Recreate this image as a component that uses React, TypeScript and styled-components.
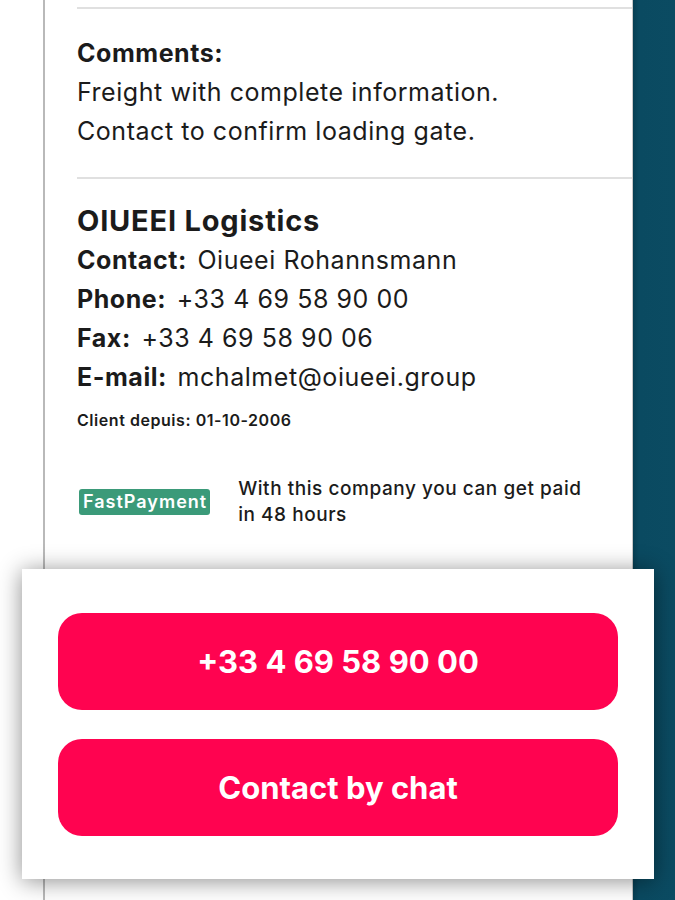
import styled, { createGlobalStyle } from 'styled-components';

const GlobalStyle = createGlobalStyle`
  html, body {
    margin: 0;
    padding: 0;
    height: 900px;
    overflow: hidden;
    background: #ffffff;
  }
  * {
    box-sizing: border-box;
  }
`;

const PHONE = '+33 4 69 58 90 00';

export default function App() {
  return (
    <Page>
      <GlobalStyle />
      <Gutter />
      <Panel>
        <Section>
          <Heading>Comments:</Heading>
          <Line>Freight with complete information.</Line>
          <Line>Contact to confirm loading gate.</Line>
        </Section>
        <Section>
          <Company>OIUEEI Logistics</Company>
          <Line>
            <Label>Contact:</Label> Oiueei Rohannsmann
          </Line>
          <Line>
            <Label>Phone:</Label> {PHONE}
          </Line>
          <Line>
            <Label>Fax:</Label> +33 4 69 58 90 06
          </Line>
          <Line>
            <Label>E-mail:</Label> mchalmet@oiueei.group
          </Line>
          <Since>Client depuis: 01-10-2006</Since>
          <PaymentRow>
            <Badge>FastPayment</Badge>
            <PaymentText>
              With this company you can get paid
              <br />
              in 48 hours
            </PaymentText>
          </PaymentRow>
        </Section>
      </Panel>
      <Strip />
      <ActionSheet>
        <ActionButton>{PHONE}</ActionButton>
        <ActionButton>Contact by chat</ActionButton>
      </ActionSheet>
    </Page>
  );
}

const Page = styled.div`
  position: relative;
  display: flex;
  flex-direction: row;
  height: 900px;
  width: 675px;
  font-family: Inter, 'Liberation Sans', sans-serif;
  color: #1b1b1b;
`;

const Gutter = styled.div`
  width: 45px;
  background: #ffffff;
  border-right: 2px solid #b9b9b9;
`;

const Panel = styled.div`
  flex: 1;
  display: flex;
  flex-direction: column;
  padding-top: 7px;
  background: #ffffff;
  border-right: 1px solid #c9c9c9;
`;

const Section = styled.div`
  margin-left: 32px;
  border-top: 2px solid #e0e0e0;
  padding: 25px 0 26px 0;
  display: flex;
  flex-direction: column;
  & + & {
    padding-top: 21px;
  }
`;

const Line = styled.div`
  font-size: 25px;
  line-height: 39px;
  font-weight: 400;
  letter-spacing: 0.55px;
  white-space: nowrap;
`;

const Heading = styled(Line)`
  font-weight: 700;
`;

const Label = styled.span`
  font-weight: 700;
  margin-right: 3px;
`;

const Company = styled.div`
  font-size: 29px;
  line-height: 41px;
  font-weight: 700;
  letter-spacing: 0.8px;
`;

const Since = styled.div`
  margin-top: 13px;
  font-size: 16px;
  line-height: 20px;
  font-weight: 600;
  letter-spacing: 0.55px;
`;

const PaymentRow = styled.div`
  margin-top: 46px;
  display: flex;
  flex-direction: row;
  align-items: center;
  gap: 28px;
  padding-left: 2px;
`;

const Badge = styled.span`
  background: #3b9a79;
  color: #ffffff;
  font-size: 18px;
  font-weight: 600;
  line-height: 24px;
  letter-spacing: 1px;
  padding: 1px 3px 1px 4px;
  border-radius: 3px;
`;

const PaymentText = styled.div`
  font-size: 19px;
  line-height: 26px;
  font-weight: 500;
  letter-spacing: 0.55px;
  white-space: nowrap;
`;

const Strip = styled.div`
  width: 42px;
  background: linear-gradient(90deg, #073f53 0px, #0a4a61 6px, #0b4b62 100%);
`;

const ActionSheet = styled.div`
  position: absolute;
  left: 22px;
  top: 569px;
  width: 632px;
  height: 310px;
  background: #ffffff;
  box-shadow: 0 2px 22px rgba(0, 0, 0, 0.45);
  display: flex;
  flex-direction: column;
  gap: 29px;
  padding: 44px 36px 0 36px;
`;

const ActionButton = styled.div`
  height: 97px;
  border-radius: 24px;
  background: #ff0350;
  color: #ffffff;
  display: flex;
  align-items: center;
  justify-content: center;
  font-size: 31px;
  font-weight: 700;
`;
